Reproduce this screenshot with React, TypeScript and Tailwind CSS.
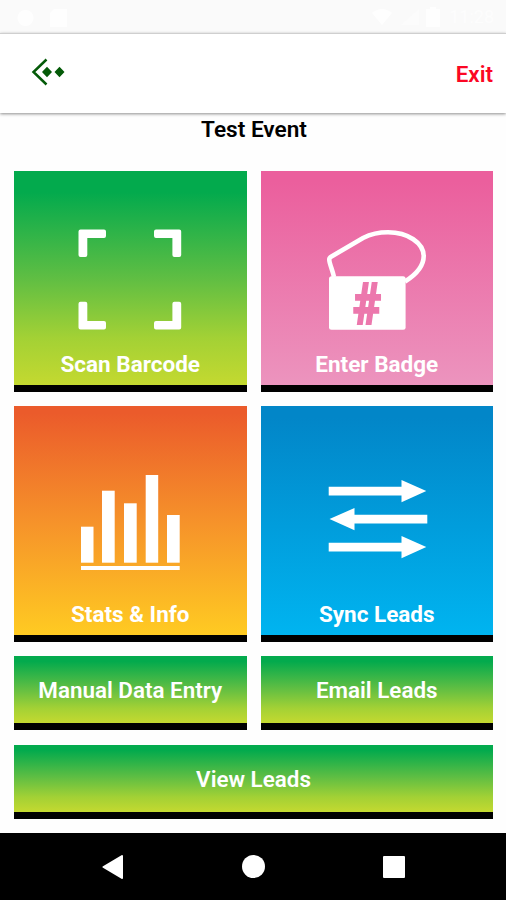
import React from 'react';

const ROBOTO = "font-['Roboto',sans-serif]";

interface TileProps {
  label: string;
  className: string;
  iconClass: string;
  children: React.ReactNode;
}

function Tile({ label, className, iconClass, children }: TileProps) {
  return (
    <button
      className={`flex flex-col items-center justify-between border-b-[7px] border-black text-white ${className}`}
    >
      <svg
        viewBox="0 0 104 104"
        className={`w-[104px] h-[104px] shrink-0 overflow-visible ${iconClass}`}
        fill="currentColor"
      >
        {children}
      </svg>
      <span className="mb-[8px] text-[22.5px] leading-[26px] font-bold">{label}</span>
    </button>
  );
}

function WideButton({ label, className = '' }: { label: string; className?: string }) {
  return (
    <button
      className={`flex h-[74px] items-center justify-center border-b-[7px] border-black bg-[linear-gradient(#03aa4d_8%,#5fbe43_48%,#a3d135_78%,#c4d930_100%)] pt-px text-[22.4px] leading-[26px] font-semibold text-white ${className}`}
    >
      {label}
    </button>
  );
}

function StatusBar() {
  return (
    <div className="flex h-[33px] items-center justify-between bg-[#fafafa] pl-[17px] pr-[12px] text-[#fefefe]">
      <div className="flex items-center gap-[16px]">
        <svg width="17" height="20" viewBox="0 0 17 20" fill="currentColor">
          <circle cx="8.500" cy="11" r="8" />
        </svg>
        <svg width="17" height="20" viewBox="0 0 17 20" fill="currentColor">
          <path d="M4 2h13v18H0V6z" />
        </svg>
      </div>
      <div className="flex items-center">
        <svg width="20" height="16" viewBox="0 0 20 16" fill="currentColor">
          <path d="M0 4Q10-4 20 4L10 16z" />
        </svg>
        <svg width="18" height="16" viewBox="0 0 18 16" fill="#fcfcfc" className="ml-[9px]">
          <path d="M0 16L18 0v16z" />
        </svg>
        <svg width="14" height="20" viewBox="0 0 14 20" fill="currentColor" className="ml-[7px]">
          <path d="M4 0h6v2h4v18H0V2h4z" />
        </svg>
        <span className="ml-[9px] text-[18px] leading-none text-[#fdfdfd]">11:28</span>
      </div>
    </div>
  );
}

function Header() {
  return (
    <header className="relative flex h-[80px] items-center justify-between border-t border-[#cfcfcf] bg-white pl-[31px] pr-[13px] shadow-[0_1px_3px_rgba(0,0,0,0.45)]">
      <svg width="35" height="30" viewBox="0 0 35 30" className="-mt-[3px]" fill="#045a08">
        <path d="M15.500 2.500L2.500 15L15.500 27.500" fill="none" stroke="#045a08" strokeWidth="2.500" />
        <path d="M16 9.800l5 5.200-5 5.200-5-5.200zM28.500 9.800l5 5.200-5 5.200-5-5.200z" />
      </svg>
      <button className="text-[22.4px] leading-[26px] font-semibold text-[#fb0724]">Exit</button>
    </header>
  );
}

function NavBar() {
  return (
    <nav className="mt-auto flex h-[67px] items-center justify-center gap-[118px] bg-black">
      <svg width="22" height="24" viewBox="0 0 22 24" fill="white">
        <path d="M20 1L1.500 12L20 23z" stroke="white" strokeWidth="2" strokeLinejoin="round" />
      </svg>
      <span className="size-[23px] rounded-full bg-white" />
      <span className="size-[22px] rounded-[1px] bg-white" />
    </nav>
  );
}

export default function App() {
  return (
    <div className={`flex h-[900px] w-[506px] flex-col overflow-hidden bg-[#fefefe] ${ROBOTO}`}>
      <StatusBar />
      <Header />
      <h1 className="mt-[4px] h-[54px] pl-[2px] text-center text-[22.6px] leading-[26px] font-semibold text-black">
        Test Event
      </h1>

      <main className="grid grid-cols-2 gap-x-[14px] gap-y-[14.500px] pl-[14px] pr-[13px]">
        <Tile
          label="Scan Barcode"
          className="h-[220.500px] bg-[linear-gradient(#03aa4d_10%,#5fbe43_50%,#a3d135_78%,#c4d930_100%)]"
          iconClass="mt-[57px]"
        >
          <g stroke="currentColor" strokeWidth="4" strokeLinejoin="round">
            <path d="M2.500 3.500H26V8H7.300V27H2.500z" />
            <path d="M101.200 3.500H78V8H96.400V27H101.200z" />
            <path d="M2.500 99.500H26V95H7.300V75.800H2.500z" />
            <path d="M101.200 99.500H78V95H96.400V75.800H101.200z" />
          </g>
        </Tile>
        <Tile
          label="Enter Badge"
          className="h-[220.500px] bg-[linear-gradient(#eb5f9d_5%,#ec94be_100%)]"
          iconClass="mt-[57px]"
        >
          <path
            d="M9 49C7.500 42 4.500 36 4.300 32Q4 30 6.500 28.500L38 10C47 5.500 56 4.300 63 4.300C83 4.300 98.500 15 98.700 28C98.700 38 92 46 80 53.500"
            fill="none"
            stroke="currentColor"
            strokeWidth="4.600"
          />
          <rect x="4" y="48.300" width="76.600" height="53.400" rx="2.500" />
          <text
            transform="translate(42 95.500) scale(0.840 1)"
            textAnchor="middle"
            fontSize="57"
            fontWeight="700"
            fill="#ec78ad"
            stroke="#ec78ad"
            strokeWidth="2"
          >
            #
          </text>
        </Tile>
        <Tile
          label="Stats & Info"
          className="h-[235.500px] bg-[linear-gradient(#eb5b2b_3%,#f6942a_52%,#ffcb22_100%)]"
          iconClass="mt-[62px]"
        >
          <rect x="3" y="58.700" width="12.500" height="36" />
          <rect x="24" y="22.700" width="12.700" height="72" />
          <rect x="46" y="35.300" width="12.700" height="59.400" />
          <rect x="67.700" y="7" width="12.500" height="87.700" />
          <rect x="89" y="47" width="12.700" height="47.700" />
          <rect x="3" y="98" width="98.700" height="4" />
        </Tile>
        <Tile
          label="Sync Leads"
          className="h-[235.500px] bg-[linear-gradient(#0286c8_5%,#00b4f0_100%)]"
          iconClass="mt-[62px]"
        >
          <path d="M3.700 18.800H76.500V12L101.300 23L76.500 34.300V27.500H3.700z" />
          <path d="M102.300 46.800H29.500V40L4.500 51L29.500 62.300V55.500H102.300z" />
          <path d="M3.700 74.800H76.500V68L101.300 79L76.500 90.300V83.500H3.700z" />
        </Tile>
        <WideButton label="Manual Data Entry" />
        <WideButton label="Email Leads" />
        <WideButton label="View Leads" className="col-span-2" />
      </main>

      <NavBar />
    </div>
  );
}
